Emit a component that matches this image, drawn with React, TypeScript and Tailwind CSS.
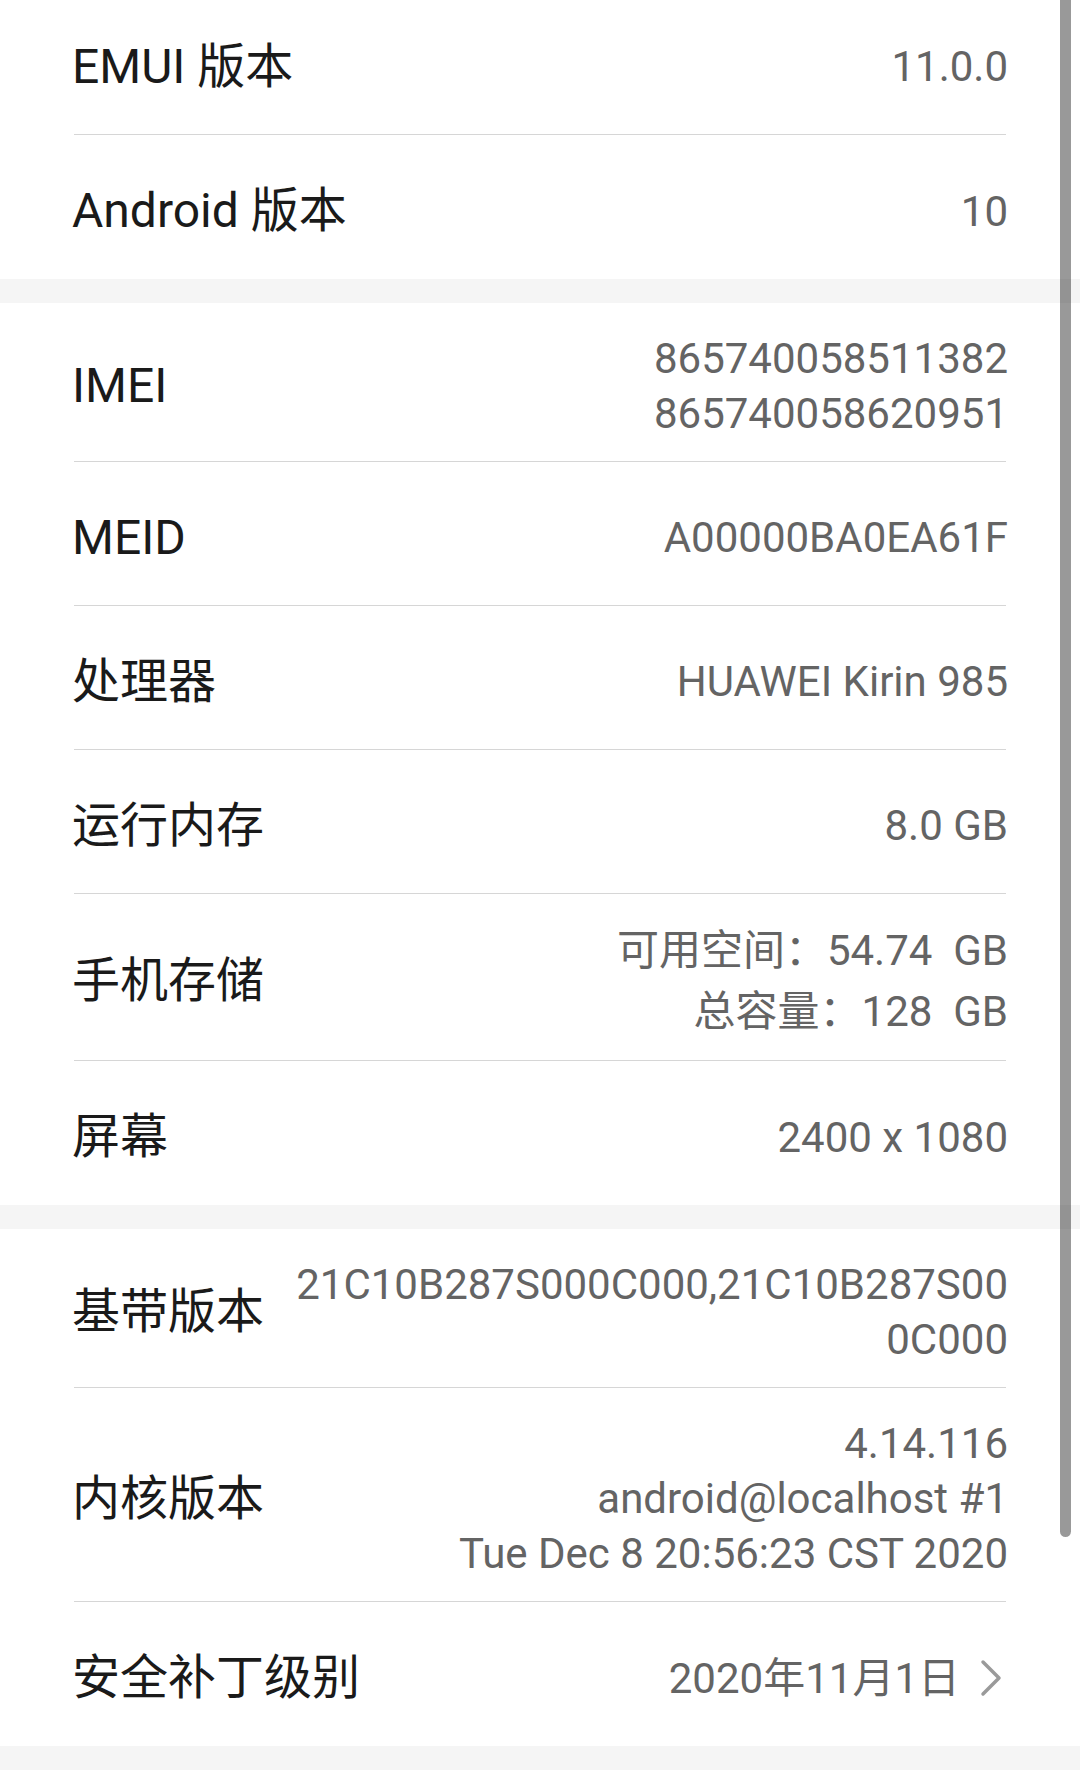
import React from "react";

type Row = {
  label: string;
  value: string[];
  tall?: boolean;
  chevron?: boolean;
};

const sections: Row[][] = [
  [
    { label: "EMUI 版本", value: ["11.0.0"] },
    { label: "Android 版本", value: ["10"] },
  ],
  [
    { label: "IMEI", value: ["865740058511382", "865740058620951"] },
    { label: "MEID", value: ["A00000BA0EA61F"] },
    { label: "处理器", value: ["HUAWEI Kirin 985"] },
    { label: "运行内存", value: ["8.0 GB"] },
    { label: "手机存储", value: ["可用空间：54.74  GB", "总容量：128  GB"], tall: true },
    { label: "屏幕", value: ["2400 x 1080"] },
  ],
  [
    { label: "基带版本", value: ["21C10B287S000C000,21C10B287S00", "0C000"] },
    { label: "内核版本", value: ["4.14.116", "android@localhost #1", "Tue Dec 8 20:56:23 CST 2020"] },
    { label: "安全补丁级别", value: ["2020年11月1日"], chevron: true },
  ],
];

const font = { fontFamily: "Roboto, 'Noto Sans CJK SC', sans-serif" };

function Chevron() {
  return (
    <svg width="22" height="38" viewBox="0 0 22 38" fill="none" className="ml-[20px] mr-[6px] shrink-0">
      <polyline points="3,3 19,19 3,35" stroke="#9a9a9a" strokeWidth="3.5" strokeLinecap="round" strokeLinejoin="round" />
    </svg>
  );
}

function InfoRow({ row, last }: { row: Row; last: boolean }) {
  const multi = row.value.length > 1;
  const pad = multi ? (row.tall ? "pt-[26px] pb-[18px]" : "pt-[28px] pb-[20px]") : "pt-[8px]";
  return (
    <div
      className={`flex items-center justify-between min-h-[144px] ${pad} ${last ? "" : "border-b border-[#d6d6d6]"}`}
    >
      <div className="-ml-[2px] text-[48px] leading-[56px] text-[#1a1a1a] shrink-0 pr-[26px]">{row.label}</div>
      <div className="flex items-center -mr-[2px]">
        <div className={`text-right text-[42px] text-[#646464] whitespace-pre ${row.tall ? "leading-[61px]" : "leading-[55px]"}`}>
          {row.value.map((v, i) => (
            <div key={i}>{v}</div>
          ))}
        </div>
        {row.chevron && <Chevron />}
      </div>
    </div>
  );
}

export default function App() {
  return (
    <div className="relative w-[1080px] h-[1777px] overflow-hidden bg-white" style={font}>
      <div className="-mt-[9px]">
        {sections.map((rows, s) => (
          <React.Fragment key={s}>
            {s > 0 && <div className="h-[24px] bg-[#f5f5f5]" />}
            <div className="bg-white px-[74px]">
              {rows.map((r, i) => (
                <InfoRow key={r.label} row={r} last={i === rows.length - 1} />
              ))}
            </div>
          </React.Fragment>
        ))}
        <div className="h-[24px] bg-[#f5f5f5]" />
      </div>

      {/* scroll indicator */}
      <div className="absolute top-0 left-[1060px] w-[11px] h-[1537px] rounded-b-[6px] bg-black/40" />
    </div>
  );
}
